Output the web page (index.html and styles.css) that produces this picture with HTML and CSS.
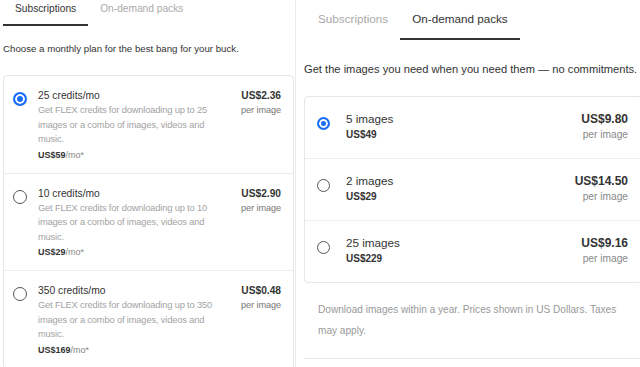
FILE: index.html
```html
<!DOCTYPE html>
<html lang="en">
<head>
  <meta charset="UTF-8">
  <title>Pricing</title>
  <meta name="viewport" content="width=device-width, initial-scale=1">
  <link rel="stylesheet" href="styles.css">
</head>
<body>

  <div class="screens">
    <!-- Subscriptions tab -->
    <section class="panel panel-subs">
      <nav class="tabs">
        <span class="tab active">Subscriptions</span>
        <span class="tab">On-demand packs</span>
      </nav>
      <p class="intro">Choose a monthly plan for the best bang for your buck.</p>

      <div class="plans">
        <div class="plan">
          <span class="radio checked"></span>
          <div class="plan-info">
            <div class="plan-title">25 credits/mo</div>
            <div class="plan-desc">Get FLEX credits for downloading up to 25 images or a combo of images, videos and music.</div>
            <div class="plan-cost"><b>US$59</b>/mo*</div>
          </div>
          <div class="plan-price"><b>US$2.36</b><small>per image</small></div>
        </div>

        <div class="plan">
          <span class="radio"></span>
          <div class="plan-info">
            <div class="plan-title">10 credits/mo</div>
            <div class="plan-desc">Get FLEX credits for downloading up to 10 images or a combo of images, videos and music.</div>
            <div class="plan-cost"><b>US$29</b>/mo*</div>
          </div>
          <div class="plan-price"><b>US$2.90</b><small>per image</small></div>
        </div>

        <div class="plan">
          <span class="radio"></span>
          <div class="plan-info">
            <div class="plan-title">350 credits/mo</div>
            <div class="plan-desc">Get FLEX credits for downloading up to 350 images or a combo of images, videos and music.</div>
            <div class="plan-cost"><b>US$169</b>/mo*</div>
          </div>
          <div class="plan-price"><b>US$0.48</b><small>per image</small></div>
        </div>
      </div>
    </section>

    <!-- On-demand tab -->
    <section class="panel panel-packs">
      <nav class="tabs">
        <span class="tab">Subscriptions</span>
        <span class="tab active">On-demand packs</span>
      </nav>
      <p class="intro">Get the images you need when you need them — no commitments.</p>

      <div class="plans">
        <div class="plan">
          <span class="radio checked"></span>
          <div class="plan-info">
            <div class="plan-title">5 images</div>
            <div class="plan-cost"><b>US$49</b></div>
          </div>
          <div class="plan-price"><b>US$9.80</b><small>per image</small></div>
        </div>

        <div class="plan">
          <span class="radio"></span>
          <div class="plan-info">
            <div class="plan-title">2 images</div>
            <div class="plan-cost"><b>US$29</b></div>
          </div>
          <div class="plan-price"><b>US$14.50</b><small>per image</small></div>
        </div>

        <div class="plan">
          <span class="radio"></span>
          <div class="plan-info">
            <div class="plan-title">25 images</div>
            <div class="plan-cost"><b>US$229</b></div>
          </div>
          <div class="plan-price"><b>US$9.16</b><small>per image</small></div>
        </div>
      </div>

      <p class="note">Download images within a year. Prices shown in US Dollars. Taxes may apply.</p>
      <div class="divider"></div>
    </section>
  </div>

</body>
</html>
```

FILE: styles.css
```css
* {
  box-sizing: border-box;
}

body {
  margin: 0;
  overflow: hidden;
  background: #fff;
  color: #333;
  font-family: "Liberation Sans", Arial, sans-serif;
}

.screens {
  display: flex;
  width: 642px;
  height: 367px;
  overflow: hidden;
}

.panel-subs {
  width: 296px;
  padding: 0 1px 0 3px;
  border-right: 1px solid #ececec;
}

.panel-packs {
  width: 346px;
  padding-left: 8px;
}

/* tabs */
.tabs {
  display: flex;
}

.tab {
  color: #aaa;
  border-bottom: 2px solid transparent;
  white-space: nowrap;
}

.tab.active {
  color: #333;
  border-bottom-color: #333;
}

.panel-subs .tab {
  padding: 2px 12px 8px;
  font-size: 10.2px;
  line-height: 14px;
}

.panel-packs .tabs {
  padding-left: 2px;
}

.panel-packs .tab {
  padding: 11px 12px;
  font-size: 11.7px;
  line-height: 16px;
}

.intro {
  margin: 0;
  white-space: nowrap;
}

.panel-subs .intro {
  margin: 16px 0 19px;
  font-size: 9.7px;
  line-height: 14px;
}

.panel-packs .intro {
  margin: 21px 0 19px;
  font-size: 11.15px;
  line-height: 16px;
}

/* plan list */
.plans {
  border: 1px solid #e6e6e6;
  border-radius: 4px;
}

.plan {
  display: flex;
  align-items: flex-start;
}

.plan + .plan {
  border-top: 1px solid #ececec;
}

.radio {
  flex: none;
  border: 1.5px solid #555;
  border-radius: 50%;
}

.radio.checked {
  border: 2px solid #1a6ef5;
  background: #1a6ef5;
  box-shadow: inset 0 0 0 2px #fff;
}

.plan-info {
  flex: 1;
}

.plan-cost {
  color: #888;
}

.plan-cost b {
  color: #333;
}

.plan-price {
  text-align: right;
  white-space: nowrap;
}

.plan-price b {
  display: block;
  color: #333;
}

.plan-price small {
  display: block;
  color: #777;
}

/* left card sizes */
.panel-subs .plan {
  padding: 12px 12px 10px 9px;
}

.panel-subs .radio {
  width: 14px;
  height: 14px;
  margin: 4px 11px 0 0;
}

.panel-subs .plan-title {
  font-size: 10.3px;
  line-height: 15px;
}

.panel-subs .plan-desc {
  width: 186px;
  font-size: 9.3px;
  line-height: 14.5px;
  letter-spacing: -0.15px;
  color: #a3a3a3;
}

.panel-subs .plan-cost {
  font-size: 9px;
  line-height: 16px;
}

.panel-subs .plan-price b {
  font-size: 10.2px;
  line-height: 15px;
}

.panel-subs .plan-price small {
  font-size: 9.2px;
  line-height: 15px;
  letter-spacing: -0.1px;
}

/* right card sizes */
.panel-packs .plan {
  padding: 14px 13px 15px 12px;
}

.panel-packs .radio {
  width: 13px;
  height: 13px;
  margin: 6px 16px 0 0;
}

.panel-packs .plan-title {
  font-size: 11.7px;
  line-height: 16px;
}

.panel-packs .plan-cost {
  font-size: 10px;
  line-height: 16px;
}

.panel-packs .plan-price b {
  font-size: 12px;
  line-height: 16px;
}

.panel-packs .plan-price small {
  font-size: 10.2px;
  line-height: 16px;
  color: #888;
}

.note {
  margin: 16px 0 0;
  padding: 0 22px 0 14px;
  font-size: 10.1px;
  line-height: 21px;
  color: #999;
}

.divider {
  margin-top: 17px;
  border-top: 1px solid #e6e6e6;
}
```
